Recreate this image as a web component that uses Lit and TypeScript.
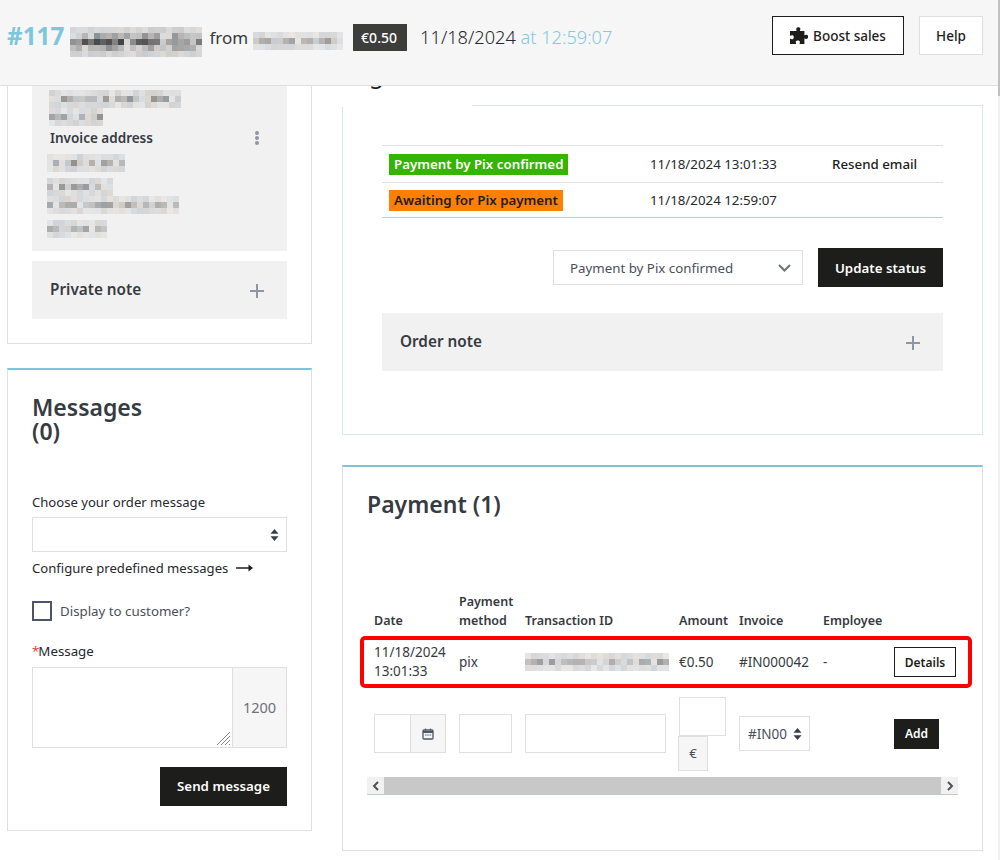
import { LitElement, html, css, svg } from 'lit';
import { customElement, property } from 'lit/decorators.js';

// Blurred-out text in the reference is a 6px mosaic, drawn from a seeded noise.
@customElement('blur-text')
export class BlurText extends LitElement {
  static styles = css`
    :host {
      display: inline-block;
      line-height: 0;
    }
  `;

  @property({ type: Number }) cols = 20;
  @property({ type: Number }) rows = 3;
  @property({ type: Number }) cell = 6;
  @property({ type: Number }) seed = 1;
  @property({ type: Number }) strength = 1;

  render() {
    let s = this.seed * 7919 + 13;
    const next = () => {
      s = (s * 16807) % 2147483647;
      return (s % 1000) / 1000;
    };
    const cells = [];
    for (let y = 0; y < this.rows; y++) {
      // middle rows carry the letter bodies, so they are darker
      const mid = 1 - Math.abs(y - (this.rows - 1) / 2) / (this.rows / 2);
      for (let x = 0; x < this.cols; x++) {
        const dark = (0.1 + next() * 0.85 * Math.pow(mid, 1.3)) * this.strength;
        const v = Math.round(240 - dark * 150);
        const tint = Math.round(next() * 10 - 5);
        cells.push(
          svg`<rect x=${x * this.cell} y=${y * this.cell} width=${this.cell} height=${this.cell} fill="rgb(${v + tint},${v},${v - tint})"></rect>`
        );
      }
    }
    const w = this.cols * this.cell;
    const h = this.rows * this.cell;
    return html`<svg width=${w} height=${h} viewBox="0 0 ${w} ${h}" shape-rendering="crispEdges">${cells}</svg>`;
  }
}

const plus = html`<svg class="plus" width="16" height="16" viewBox="0 0 16 16"><path d="M8 1v14M1 8h14" stroke="#8f96a3" stroke-width="2" fill="none"></path></svg>`;

const updown = html`<svg class="updown" width="9" height="12" viewBox="0 0 9 12"><path d="M4.5 0 8.5 4.8H.5zM4.5 12 .5 7.2h8z" fill="#3a3f47"></path></svg>`;

@customElement('app-root')
export class AppRoot extends LitElement {
  static styles = css`
    :host {
      display: block;
      position: relative;
      height: 860px;
      overflow: hidden;
      background: #fff;
      color: #363a41;
      font-family: 'Noto Sans', 'Liberation Sans', sans-serif;
      font-size: 13.3px;
    }
    * {
      box-sizing: border-box;
    }
    .page-scroll {
      position: absolute;
      z-index: 3;
      top: 0;
      right: 0;
      width: 2px;
      height: 860px;
      background: #f1f1f1;
    }
    .page-scroll i {
      display: block;
      height: 96px;
      background: #c1c1c1;
    }
    .header {
      position: relative;
      z-index: 2;
      height: 86px;
      background: #f6f6f6;
      border-bottom: 1px solid #dfdfdf;
      display: flex;
      align-items: flex-start;
      padding: 16px 17px 0 7px;
    }
    .title {
      flex: 1;
      display: flex;
      align-items: center;
      height: 39px;
      padding-top: 3px;
      font-size: 17px;
    }
    .num {
      font-size: 24.300px;
      font-weight: 700;
      color: #7cc7dc;
      margin: -4px 6px 0 0;
    }
    .order-name {
      margin-top: 10px;
    }
    .buyer {
      margin-top: 7px;
    }
    .from {
      margin: 0 5px 0 7px;
    }
    .price {
      background: #3d3d3b;
      color: #fff;
      font-size: 14px;
      font-weight: 500;
      padding: 4px 8px;
      width: 54px;
      height: 27px;
      white-space: nowrap;
      margin: 0 13px 0 10px;
    }
    .when {
      font-size: 18.200px;
      font-weight: 300;
      color: #25282e;
    }
    .when span {
      color: #86c8de;
    }
    .hbtn {
      height: 39px;
      display: flex;
      align-items: center;
      gap: 5px;
      background: #fff;
      font-size: 13.5px;
      font-weight: 500;
      color: #1d1d1b;
    }
    .boost {
      width: 132px;
      justify-content: center;
      border: 1px solid #1d1d1b;
      margin-right: 15px;
    }
    .help {
      width: 64px;
      justify-content: center;
      border: 1px solid #dfdfdf;
    }
    .columns {
      display: grid;
      grid-template-columns: 305px 641px;
      gap: 30px;
      padding-left: 7px;
      align-items: start;
    }
    .left {
      display: flex;
      flex-direction: column;
      gap: 24px;
    }
    .card {
      background: #fff;
      border: 1px solid #dfdfdf;
    }
    .addr-card {
      height: 258px;
      border-top: 0;
      padding: 0 24px;
    }
    .addr {
      height: 165px;
      background: #f1f1f1;
      padding: 4px 18px 0;
    }
    .addr blur-text {
      display: block;
      margin-left: -3px;
    }
    .addr blur-text.top {
      margin-left: -1px;
    }
    .addr blur-text.gap {
      margin-top: 6px;
    }
    .addr-title {
      display: flex;
      justify-content: space-between;
      align-items: center;
      font-weight: 600;
      font-size: 13.5px;
      height: 20px;
      margin-top: 2px;
      padding-right: 10px;
      color: #363a41;
    }
    .kebab {
      display: flex;
      flex-direction: column;
      gap: 1px;
    }
    .kebab i {
      width: 4px;
      height: 4px;
      border-radius: 50%;
      background: #8f96a3;
    }
    .note {
      display: flex;
      justify-content: space-between;
      align-items: center;
      background: #f1f1f1;
      height: 58px;
      font-size: 15.300px;
      font-weight: 600;
      padding: 0 22px 2px 18px;
    }
    .plus {
      margin-top: 3px;
    }
    .private {
      margin-top: 10px;
    }
    .msg-card {
      height: 463px;
      border-top: 2px solid #7cc4d8;
      padding: 25px 24px 0;
    }
    h2 {
      margin: 0;
      font-size: 23px;
      font-weight: 600;
      line-height: 24px;
    }
    .msg-card label {
      display: block;
      color: #25282e;
    }
    .choose {
      margin-top: 49px;
      line-height: 20px;
      font-size: 13.100px;
    }
    .sel {
      display: flex;
      align-items: center;
      justify-content: flex-end;
      height: 35px;
      margin-top: 5px;
      padding-right: 7px;
      border: 1px solid #dfdfdf;
    }
    .cfg {
      display: flex;
      align-items: center;
      gap: 8px;
      margin-top: 6px;
      line-height: 20px;
      font-size: 13.100px;
      color: #25282e;
    }
    .check {
      display: flex;
      align-items: center;
      gap: 8px;
      margin-top: 23px;
      color: #4a4f59;
    }
    .check i {
      width: 20px;
      height: 20px;
      border: 2px solid #4d5566;
    }
    .msg-label {
      margin-top: 20px;
      line-height: 20px;
    }
    .msg-label b {
      color: #e0434b;
      font-weight: 400;
      margin-right: -1px;
    }
    .area {
      display: grid;
      grid-template-columns: 1fr 54px;
      height: 81px;
      margin-top: 6px;
      border: 1px solid #dfdfdf;
    }
    .ta {
      position: relative;
    }
    .grip {
      position: absolute;
      right: 1px;
      bottom: 1px;
    }
    .count {
      display: flex;
      align-items: center;
      justify-content: center;
      padding-bottom: 2px;
      background: #f6f6f6;
      border-left: 1px solid #dfdfdf;
      color: #6c717b;
      font-size: 14.500px;
    }
    .dark {
      display: inline-flex;
      align-items: center;
      justify-content: center;
      background: #1d1d1b;
      color: #fff;
      font-weight: 600;
      font-size: 13.300px;
    }
    .send-row {
      display: flex;
      justify-content: flex-end;
      margin-top: 19px;
    }
    .send {
      width: 127px;
      height: 39px;
      padding-bottom: 2px;
    }
    .right {
      display: flex;
      flex-direction: column;
      gap: 30px;
      margin-top: 19px;
    }
    .status-card {
      position: relative;
      height: 330px;
      border-color: #dbe8ea;
      padding: 39px 39px 0;
    }
    .tab {
      position: absolute;
      left: -1px;
      top: -40px;
      width: 130px;
      height: 41px;
      background: #fff;
      overflow: hidden;
    }
    .tab span {
      position: absolute;
      font-size: 24px;
      line-height: 24px;
      color: #1d1d1b;
    }
    .tab .g {
      left: 27px;
      bottom: 21px;
    }
    .tab .pp {
      left: 93px;
      bottom: 24px;
      letter-spacing: -5px;
    }
    .row {
      display: grid;
      grid-template-columns: 261px 182px 1fr;
      align-items: center;
      padding-left: 7px;
      border-top: 1px solid #dfdfdf;
      color: #25282e;
    }
    .row.r1 {
      height: 37px;
    }
    .row.r2 {
      height: 36px;
      border-bottom: 1px solid #bccdd6;
    }
    .tag {
      justify-self: start;
      padding: 0 5px;
      height: 21px;
      line-height: 20px;
      font-weight: 600;
    }
    .green {
      background: #35b400;
      color: #fff;
    }
    .orange {
      background: #ff7f00;
      color: #1d1d1b;
    }
    .resend {
      font-weight: 500;
      color: #1d1d1b;
    }
    .update {
      display: flex;
      justify-content: flex-end;
      align-items: center;
      gap: 15px;
      margin-top: 30px;
    }
    .status-sel {
      width: 250px;
      height: 35px;
      display: flex;
      align-items: center;
      justify-content: space-between;
      padding: 0 11px 0 16px;
      border: 1px solid #dfdfdf;
      color: #4a4f59;
    }
    .upd {
      width: 125px;
      height: 39px;
    }
    .order {
      margin-top: 26px;
    }
    .pay-card {
      height: 386px;
      border-top: 2px solid #7cc4d8;
      padding: 25px 24px 0;
    }
    .pay-table {
      margin-top: 76px;
      width: 591px;
    }
    .cols {
      display: grid;
      grid-template-columns: 85px 66px 154px 60px 84px 71px 1fr;
      padding-left: 7px;
    }
    .th {
      align-items: end;
      font-weight: 600;
      font-size: 12.5px;
      line-height: 19px;
    }
    .pay-row {
      align-items: center;
      height: 52px;
      margin: 6px -14px 0 -7px;
      padding-left: 10px;
      border: 4px solid #f00;
      border-radius: 5px;
      color: #363a41;
      font-size: 13.500px;
      line-height: 19px;
    }
    .details {
      width: 62px;
      height: 30px;
      display: flex;
      align-items: center;
      justify-content: center;
      border: 1px solid #1d1d1b;
      color: #1d1d1b;
      font-size: 12px;
      font-weight: 600;
    }
    .add-row {
      align-items: center;
      height: 89px;
      padding-top: 2px;
      color: #4a4f59;
    }
    .box {
      height: 39px;
      border: 1px solid #dfdfdf;
    }
    .date-in {
      width: 72px;
      display: grid;
      grid-template-columns: 1fr 35px;
    }
    .date-in span {
      display: flex;
      align-items: center;
      justify-content: center;
      background: #f6f6f6;
      border-left: 1px solid #dfdfdf;
    }
    .m-in {
      width: 53px;
    }
    .t-in {
      width: 141px;
    }
    .amt {
      display: flex;
      flex-direction: column;
      align-items: flex-start;
      width: 47px;
    }
    .amt .box {
      width: 47px;
    }
    .amt .eur {
      width: 30px;
      height: 35px;
      margin-left: -1px;
      display: flex;
      align-items: center;
      justify-content: center;
      background: #f6f6f6;
      border: 1px solid #dfdfdf;
    }
    .inv {
      width: 71px;
      height: 35px;
      display: flex;
      align-items: center;
      justify-content: space-between;
      padding: 0 7px 0 8px;
      border: 1px solid #dfdfdf;
      font-size: 13.500px;
    }
    .inv b {
      width: 39px;
      overflow: hidden;
      white-space: nowrap;
      font-weight: 400;
    }
    .add {
      width: 45px;
      height: 30px;
      font-size: 12px;
    }
    .scroll {
      display: flex;
      justify-content: space-between;
      height: 18px;
      background: #c8c8c8;
      border-bottom: 1px solid #bccdd6;
    }
    .scroll span {
      width: 17px;
      display: flex;
      align-items: center;
      justify-content: center;
      background: #f1f1f1;
    }
  `;

  render() {
    return html`
      <div class="page-scroll"><i></i></div>
      <div class="header">
        <div class="title">
          <span class="num">#117</span>
          <blur-text class="order-name" cols="22" rows="5" seed="3" strength="1.2"></blur-text>
          <span class="from">from</span>
          <blur-text class="buyer" cols="15" rows="3" seed="5" strength="0.6"></blur-text>
          <span class="price">€0.50</span>
          <span class="when">11/18/2024 <span>at 12:59:07</span></span>
        </div>
        <div class="hbtn boost">
          <svg width="18" height="18" viewBox="1 0.5 15.5 15.5"><path d="M6.5 1.6C7 .4 9.400.3 9.900 1.700c.3.900-.5 1.400-.4 2.200h3.900v3.700c.8.100 1.300-.7 2.200-.4 1.400.5 1.400 2.900.1 3.500-.9.400-1.500-.4-2.300-.3v4.800H9.200c-.1-.8.6-1.300.3-2.200-.5-1.300-3-1.300-3.500 0-.3.900.4 1.400.3 2.200H1v-4.600c.8.100 1.300.7 2.200.4 1.400-.5 1.400-2.900 0-3.400-.9-.3-1.400.3-2.200.4V3.900h5.600c.1-.8-.5-1.400-.1-2.300z" fill="#1d1d1b"></path></svg>
          Boost sales
        </div>
        <div class="hbtn help">Help</div>
      </div>
      <div class="columns">
        <div class="left">
          <div class="card addr-card">
            <div class="addr">
              <blur-text class="top" cols="22" rows="3" seed="7" strength="0.7"></blur-text>
              <blur-text class="top" cols="9" rows="3" seed="8" strength="0.7"></blur-text>
              <div class="addr-title">Invoice address <span class="kebab"><i></i><i></i><i></i></span></div>
              <blur-text class="gap" cols="13" rows="3" seed="9" strength="0.7"></blur-text>
              <blur-text class="gap" cols="11" rows="3" seed="10" strength="0.6"></blur-text>
              <blur-text cols="22" rows="3" seed="11" strength="0.6"></blur-text>
              <blur-text class="gap" cols="10" rows="3" seed="12" strength="0.6"></blur-text>
            </div>
            <div class="note private">Private note ${plus}</div>
          </div>
          <div class="card msg-card">
            <h2>Messages<br />(0)</h2>
            <label class="choose">Choose your order message</label>
            <div class="sel">${updown}</div>
            <div class="cfg">
              Configure predefined messages
              <svg width="17" height="10" viewBox="0 0 17 10"><path d="M0 5h14" stroke="#1d1d1b" stroke-width="1.500"></path><path d="M12.500 1.500 17 5l-4.500 3.500z" fill="#1d1d1b"></path></svg>
            </div>
            <div class="check"><i></i>Display to customer?</div>
            <label class="msg-label"><b>*</b>Message</label>
            <div class="area">
              <div class="ta">
                <svg class="grip" width="15" height="15" viewBox="0 0 15 15"><path d="M1 14 14 1M5 14 14 5M9 14l5-5M13 14l1-1" stroke="#8a8a8a" stroke-width="1"></path></svg>
              </div>
              <div class="count">1200</div>
            </div>
            <div class="send-row"><span class="dark send">Send message</span></div>
          </div>
        </div>
        <div class="right">
          <div class="card status-card">
            <div class="tab"><span class="g">g</span><span class="pp">pp</span></div>
            <div class="row r1">
              <span class="tag green">Payment by Pix confirmed</span>
              <span>11/18/2024 13:01:33</span>
              <span class="resend">Resend email</span>
            </div>
            <div class="row r2">
              <span class="tag orange">Awaiting for Pix payment</span>
              <span>11/18/2024 12:59:07</span>
              <span></span>
            </div>
            <div class="update">
              <div class="status-sel">
                Payment by Pix confirmed
                <svg width="13" height="8" viewBox="0 0 13 8"><path d="M1 1l5.500 5.500L12 1" stroke="#6c717b" stroke-width="2" fill="none"></path></svg>
              </div>
              <span class="dark upd">Update status</span>
            </div>
            <div class="note order">Order note ${plus}</div>
          </div>
          <div class="card pay-card">
            <h2>Payment (1)</h2>
            <div class="pay-table">
              <div class="cols th">
                <span>Date</span><span>Payment method</span><span>Transaction ID</span><span>Amount</span><span>Invoice</span><span>Employee</span><span></span>
              </div>
              <div class="cols pay-row">
                <span>11/18/2024<br />13:01:33</span>
                <span>pix</span>
                <blur-text cols="24" rows="3" cell="6" seed="21" strength="0.6"></blur-text>
                <span>€0.50</span>
                <span>#IN000042</span>
                <span>-</span>
                <span class="details">Details</span>
              </div>
              <div class="cols add-row">
                <div class="box date-in">
                  <i></i>
                  <span><svg width="12" height="12" viewBox="0 0 12 12"><rect x="1" y="2" width="10" height="9" rx="1" fill="none" stroke="#4d5566" stroke-width="1.300"></rect><path d="M1 3h10v2H1z" fill="#4d5566"></path><path d="M3 7h1.500M5.300 7h1.500M7.600 7h1.500" stroke="#4d5566"></path><path d="M3.500 .5v2M8.500 .5v2" stroke="#4d5566"></path></svg></span>
                </div>
                <div class="box m-in"></div>
                <div class="box t-in"></div>
                <div class="amt"><div class="box"></div><div class="eur">€</div></div>
                <div class="inv"><b>#IN000042</b>${updown}</div>
                <span></span>
                <span class="dark add">Add</span>
              </div>
              <div class="scroll">
                <span><svg width="8" height="10" viewBox="0 0 8 10"><path d="M6 1 2 5l4 4" stroke="#50505a" stroke-width="2" fill="none"></path></svg></span>
                <span><svg width="8" height="10" viewBox="0 0 8 10"><path d="M2 1l4 4-4 4" stroke="#50505a" stroke-width="2" fill="none"></path></svg></span>
              </div>
            </div>
          </div>
        </div>
      </div>
    `;
  }
}
